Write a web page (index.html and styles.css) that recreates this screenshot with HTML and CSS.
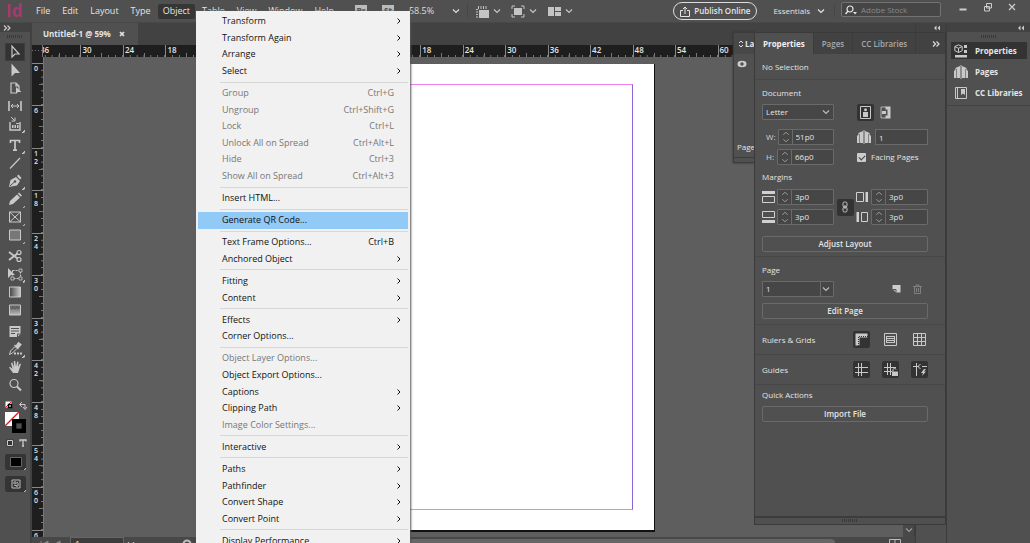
FILE: index.html
```html
<!DOCTYPE html>
<html lang="en">
<head>
<meta charset="utf-8">
<title>Untitled-1 @ 59%</title>
<link rel="stylesheet" href="styles.css">
</head>
<body>
<svg class="defs" width="0" height="0" aria-hidden="true">
  <symbol id="chev" viewBox="0 0 8 6"><path d="M1 1.500l3 3 3-3" fill="none" stroke="currentColor" stroke-width="1.200"/></symbol>
  <symbol id="sub" viewBox="0 0 6 8"><path d="M1.500 1.500L4 4 1.500 6.500" fill="none" stroke="currentColor" stroke-width="1"/></symbol>
  <symbol id="collapse" viewBox="0 0 8 6"><path d="M3.500 .5L1 3l2.500 2.500zM7 .5L4.500 3 7 5.500z" fill="currentColor"/></symbol>
  <symbol id="expand" viewBox="0 0 8 6"><path d="M1 .5L3.500 3 1 5.500M4.500 .5L7 3 4.500 5.500" fill="none" stroke="currentColor" stroke-width="1.200"/></symbol>
  <symbol id="step" viewBox="0 0 14 16"><path d="M4 5.500l3-3 3 3M4 10.500l3 3 3-3" fill="none" stroke="currentColor"/></symbol>
  <symbol id="spread" viewBox="0 0 14 14"><path d="M0 13V6l1.500-1.500V3L6 1v12zM8 13V1l4.500 2v1.500L14 6v7z" fill="currentColor"/><path d="M2.500 4v9M11.500 4v9" stroke="#505050" stroke-width=".6"/><path d="M7 0v14" stroke="currentColor"/></symbol>
</svg>

<div class="app">
  <header class="menubar">
    <span class="logo">Id</span>
    <nav class="menus">
      <button>File</button><button>Edit</button><button>Layout</button><button>Type</button><button class="open">Object</button><button>Table</button><button>View</button><button>Window</button><button>Help</button>
    </nav>
    <div class="appbar">
      <button class="chip">Br</button>
      <button class="chip">St</button>
      <button class="zoomlevel">58.5%<svg width="8" height="6"><use href="#chev"/></svg></button>
      <div class="viewtools">
        <button><svg width="14" height="13" viewBox="0 0 14 13"><path d="M4 5h10v8H4z" fill="currentColor"/><path d="M3 2.500h10" stroke="currentColor" stroke-width="3" stroke-dasharray="1 1.500"/><path d="M2 4v9" stroke="currentColor" stroke-width="2" stroke-dasharray="1 1.500"/></svg><svg width="8" height="6"><use href="#chev"/></svg></button>
        <button><svg width="14" height="13" viewBox="0 0 14 13"><path d="M3 3h8v7H3z" fill="currentColor"/><path d="M1 4V1h3M10 1h3v3M13 9v3h-3M4 12H1V9" fill="none" stroke="currentColor"/></svg><svg width="8" height="6"><use href="#chev"/></svg></button>
        <button><svg width="14" height="13" viewBox="0 0 14 13"><path d="M1 2h6v9H1zM8 2h6v4H8zM8 7h6v4H8z" fill="currentColor"/></svg><svg width="8" height="6"><use href="#chev"/></svg></button>
      </div>
    </div>
    <div class="right">
      <button class="publish"><svg width="10" height="11" viewBox="0 0 10 11"><path d="M3 4.500H.5v6h9v-6H7M5 8V1M3 3l2-2 2 2" fill="none" stroke="currentColor"/></svg>Publish Online</button>
      <button class="essentials">Essentials<svg width="8" height="6"><use href="#chev"/></svg></button>
      <label class="search"><svg width="13" height="10" viewBox="0 0 13 10"><circle cx="5" cy="4" r="3" fill="none" stroke="currentColor" stroke-width="1.200"/><path d="M3 6L.5 9" stroke="currentColor" stroke-width="1.500"/><path d="M8 7h4l-2 2.500z" fill="currentColor"/></svg><input type="text" placeholder="Adobe Stock" aria-label="Adobe Stock"></label>
      <div class="wincontrols">
        <button aria-label="Minimize"><svg width="10" height="10" viewBox="0 0 10 10"><path d="M1.500 7.500h7" stroke="currentColor" stroke-width="2"/></svg></button>
        <button aria-label="Restore"><svg width="10" height="10" viewBox="0 0 10 10"><path d="M3.500 1.500h5v4.500h-5zM1.500 4.500h5V9h-5z" fill="#505050" stroke="currentColor"/></svg></button>
        <button aria-label="Close"><svg width="10" height="10" viewBox="0 0 10 10"><path d="M2 2l6 6M8 2L2 8" stroke="currentColor" stroke-width="1.200"/></svg></button>
      </div>
    </div>
  </header>

  <main class="workspace">
    <aside class="toolbar">
      <div class="dockhead start"><svg width="8" height="6"><use href="#expand"/></svg></div>
      <div class="grip"></div>
      <div class="tools">
        <button class="on" aria-label="Selection"><svg viewBox="0 0 20 18"><path d="M7 3v11l3-3h4z" fill="none" stroke="currentColor" stroke-width="1.200"/></svg></button>
        <button aria-label="Direct Selection"><svg viewBox="0 0 20 18"><path d="M6.500 2.500v13l3.500-3.500h5z" fill="currentColor"/></svg></button>
        <button aria-label="Page"><svg viewBox="0 0 20 18"><path d="M11 14H6V4h5l3 3v4M11 4v3h3" fill="none" stroke="currentColor" stroke-width="1.200"/><path d="M11 8v7l2-2h3.500z" fill="currentColor"/></svg></button>
        <button aria-label="Gap"><svg viewBox="0 0 20 18"><path d="M4 4v10M16 4v10" stroke="currentColor" stroke-width="1.600"/><path d="M6 9h8M8 7L6 9l2 2M12 7l2 2-2 2" fill="none" stroke="currentColor"/></svg></button>
        <button class="more" aria-label="Content Collector"><svg viewBox="0 0 20 18"><path d="M5 7v8h10V7" fill="none" stroke="currentColor" stroke-width="1.400"/><path d="M7 10h1.500v3H7zM9.500 10H11v3H9.500zM12 10h1.500v3H12z" fill="currentColor"/><path d="M6 2l3.500 3.500M10 2.500V6H6.500M11 8.500h3" fill="none" stroke="currentColor"/></svg></button>
      </div>
      <div class="tools">
        <button class="more" aria-label="Type"><svg viewBox="0 0 20 18"><path d="M5.500 7V4.500h9V7M10 4.500V14M8 14.200h4" fill="none" stroke="currentColor" stroke-width="1.700"/></svg></button>
        <button aria-label="Line"><svg viewBox="0 0 20 18"><path d="M5 14.500L15 4" stroke="currentColor" stroke-width="1.200"/></svg></button>
        <button class="more" aria-label="Pen"><svg viewBox="0 0 20 18"><path d="M4 15l1.500-7L11 5l4 4-3 4.500z" fill="currentColor"/><path d="M12 4l1.500-1.500L16.500 6 15 7.500z" fill="currentColor"/><path d="M5 14l4.500-4" stroke="#505050"/><circle cx="10" cy="9.500" r="1.200" fill="#505050"/></svg></button>
        <button class="more" aria-label="Pencil"><svg viewBox="0 0 20 18"><path d="M4 15l1-4 7-6.500 3 3L8 14zM12.800 3.800L14 2.500l3 3-1.200 1.200z" fill="currentColor"/></svg></button>
        <button class="more" aria-label="Rectangle Frame"><svg viewBox="0 0 20 18"><path d="M4.500 4h11v10h-11zM4.500 4l11 10M15.500 4l-11 10" fill="none" stroke="currentColor"/></svg></button>
        <button class="more" aria-label="Rectangle"><svg viewBox="0 0 20 18"><path d="M4.500 4h11v10h-11z" fill="#777" stroke="currentColor"/></svg></button>
      </div>
      <div class="tools">
        <button aria-label="Scissors"><svg viewBox="0 0 20 18"><circle cx="14" cy="5.500" r="2" fill="none" stroke="currentColor" stroke-width="1.200"/><circle cx="14" cy="12.500" r="2" fill="none" stroke="currentColor" stroke-width="1.200"/><path d="M4 5l8.500 6.500M4 13l8.500-6.500" stroke="currentColor" stroke-width="1.800"/></svg></button>
        <button class="more" aria-label="Free Transform"><svg viewBox="0 0 20 18"><path d="M7.500 5.500h8v8h-8z" fill="none" stroke="currentColor" stroke-dasharray="2 1"/><path d="M6 12h3v3H6zM14 12h3v3h-3zM14 4h3v3h-3z" fill="#505050" stroke="currentColor" stroke-width=".8"/><path d="M3 3v10l3-3h4z" fill="currentColor"/></svg></button>
        <button aria-label="Gradient Swatch"><svg viewBox="0 0 20 18"><defs><linearGradient id="g1"><stop stop-color="#444"/><stop offset="1" stop-color="#ccc"/></linearGradient></defs><path d="M4.500 4h11v10h-11z" fill="url(#g1)" stroke="currentColor"/></svg></button>
        <button aria-label="Gradient Feather"><svg viewBox="0 0 20 18"><defs><linearGradient id="g2" x2="0" y2="1"><stop stop-color="#555"/><stop offset="1" stop-color="#bbb"/></linearGradient></defs><path d="M4.500 4h11v10h-11z" fill="url(#g2)" stroke="currentColor"/><path d="M6 8q2-3 4 0 2-3 4 0" fill="none" stroke="#555"/></svg></button>
      </div>
      <div class="tools">
        <button aria-label="Note"><svg viewBox="0 0 20 18"><path d="M4.500 4h11v8l-3 3h-8z" fill="currentColor"/><path d="M6 6.500h8M6 9h8M6 11.500h4M12.500 15v-3h3" fill="none" stroke="#505050"/></svg></button>
        <button class="more" aria-label="Eyedropper"><svg viewBox="0 0 20 18"><path d="M4.500 14.500l1-3.500 4.500-4.500 2 2L7.500 13z" fill="none" stroke="currentColor"/><path d="M9.500 5l4 4M11 6l2.500-3.500 2.500 2L13 8z" stroke="currentColor" stroke-width="1.200" fill="currentColor"/><path d="M9 13.500h8" stroke="currentColor" stroke-width="2" stroke-dasharray="2 1"/></svg></button>
        <button aria-label="Hand"><svg viewBox="0 0 20 18"><path d="M8 15L4 9.500l1-.7L7.500 11 6 5l1.300-.4L9 9l-.2-6h1.400L11 8.500l1.200-5 1.300.3L13 9l1.800-3.500 1.200.6L14 12l-1 3z" fill="currentColor"/></svg></button>
        <button aria-label="Zoom"><svg viewBox="0 0 20 18"><circle cx="9" cy="7.500" r="4" fill="none" stroke="currentColor" stroke-width="1.200"/><path d="M12 10.500l4 4" stroke="currentColor" stroke-width="2"/></svg></button>
      </div>
      <div class="colors">
        <svg width="24" height="42" viewBox="0 0 24 42">
          <path d="M1.500 4.500h6v6h-6z" fill="#fff"/><path d="M1.500 10.500l6-6" stroke="#d22"/><path d="M4.500 7.500h3v3h-3z" fill="none" stroke="#000" stroke-width="1.500"/>
          <path d="M16 7.500h5v4M18 5l-2.500 2.500L18 10M19 10l2 2.500 2-2.500" fill="none" stroke="#ccc"/>
          <path d="M1 15h14v14H1z" fill="#fff"/><path d="M1 29l14-14" stroke="#d2232a" stroke-width="1.500"/>
          <path d="M8 22h14v14H8z" fill="#000"/><path d="M12.500 26.500h5v5h-5z" fill="#505050" stroke="#333"/>
        </svg>
        <div class="affect"><svg width="8" height="8" viewBox="0 0 8 8"><path d="M.5 .5h7v7h-7z" fill="#333"/><path d="M1.500 1.500h5v5h-5z" fill="none" stroke="#ccc"/></svg><svg width="8" height="8" viewBox="0 0 8 8"><path d="M1 2.500V1h6v1.500M4 1v6M3 7h2" fill="none" stroke="#ccc" stroke-width="1.300"/></svg></div>
        <button class="well more" aria-label="Apply Color"><svg width="12" height="10"><path d="M.5 .5h11v9H.5z" fill="#000" stroke="#666"/></svg></button>
        <button class="well more" aria-label="Screen Mode"><svg width="10" height="10" viewBox="0 0 10 10"><path d="M1 1h8v8H1z" fill="none" stroke="#bbb"/><path d="M3 5V3h2M5 7h2V4M4 5l3-2M3 6l3 1" fill="none" stroke="#bbb"/></svg></button>
      </div>
    </aside>

    <section class="document">
      <div class="tabs"><div class="tab"><span>Untitled-1 @ 59%</span><button aria-label="Close tab"><svg width="6" height="6"><path d="M1 1l4 4M5 1L1 5" stroke="currentColor" stroke-width="1.700"/></svg></button></div></div>
      <div class="hruler"><div class="origin"></div><div class="hscale"><span>36</span><span>30</span><span>24</span><span>18</span><span>12</span><span>6</span><span>0</span><span>6</span><span>12</span><span>18</span><span>24</span><span>30</span><span>36</span><span>42</span><span>48</span><span>54</span><span>60</span></div></div>
      <div class="stage">
        <div class="vruler"><div class="vscale"><span>0</span><span>6</span><span>1<br>2</span><span>1<br>8</span><span>2<br>4</span><span>3<br>0</span><span>3<br>6</span><span>4<br>2</span><span>4<br>8</span><span>5<br>4</span><span>6<br>0</span><span>6<br>6</span></div></div>
        <div class="canvas"><div class="page"><div class="margins"></div></div></div>
        <div class="vscroll"><svg width="8" height="6"><use href="#chev"/></svg></div>
      </div>
      <footer class="status">
        <span class="nav"><svg width="22" height="8"><path d="M1 1v6M8 1v6L3 4zM20 1v6l-5-3z" fill="#888" stroke="#888"/></svg></span>
        <span class="pageno">1</span><span class="drop"><svg width="8" height="6"><use href="#chev"/></svg></span>
        <svg class="preflight" width="10" height="10"><circle cx="5" cy="5" r="3.500" fill="none" stroke="#bbb" stroke-width="2"/></svg>
        <span class="hscroll"></span>
        <svg class="split" width="12" height="10"><path d="M.5 .5h11v9H.5zM6 0v10M0 4.500h12" fill="none" stroke="#bbb"/></svg>
      </footer>
    </section>

    <aside class="dock slim"><div class="dockhead"><svg width="8" height="6"><use href="#collapse"/></svg></div></aside>
    <aside class="dock">
      <div class="dockhead"><svg width="8" height="6"><use href="#collapse"/></svg></div>
      <div class="grip"></div>
      <div class="docklist">
        <button class="on"><svg width="14" height="14" viewBox="0 0 14 14"><path d="M4.500 .8L8.200 2.500v4.200L4.500 8.500.8 6.700V2.500zM.8 2.500l3.700 1.800 3.700-1.800M4.500 4.300v4.200" fill="none" stroke="currentColor"/><path d="M10 1h3v3h-3zM10 6h3v3h-3zM1 11h12v2.500H1z" fill="currentColor"/></svg>Properties</button>
        <button><svg width="14" height="14"><use href="#spread"/></svg>Pages</button>
        <button><svg width="14" height="14" viewBox="0 0 14 14"><path d="M1.500 1.500h11v11h-11zM3.500 1.500v11" fill="none" stroke="currentColor"/><path d="M7 3h4v6L9 7.500 7 9z" fill="currentColor"/></svg>CC Libraries</button>
      </div>
    </aside>
  </main>
</div>

<section class="layers">
  <div class="layerhead"><svg width="6" height="8" viewBox="0 0 6 8"><path d="M1 3l2-2 2 2M1 5l2 2 2-2" fill="none" stroke="currentColor"/></svg>La</div>
  <div class="layerrow"><svg width="10" height="8" viewBox="0 0 10 8"><ellipse cx="5" cy="4" rx="4.500" ry="3.200" fill="#ccc"/><circle cx="5" cy="4" r="1.700" fill="#505050"/></svg></div>
  <div class="layerfoot">Page</div>
</section>

<section class="props">
  <div class="ptabs"><button class="on">Properties</button><button>Pages</button><button>CC Libraries</button><button class="exp" aria-label="Collapse panel"><svg width="8" height="6"><use href="#expand"/></svg></button></div>
  <div class="sec nosel">No Selection</div>
  <div class="sec doc">
    <h2>Document</h2>
    <div class="cols">
      <div class="l"><select aria-label="Page size"><option>Letter</option></select><svg class="selchev" width="8" height="6"><use href="#chev"/></svg></div>
      <div class="orient">
        <button class="tile on" aria-label="Portrait"><svg width="11" height="13" viewBox="0 0 11 13"><path d="M.5 .5h10v12H.5z" fill="none" stroke="currentColor"/><circle cx="5.500" cy="3.800" r="1.500" fill="currentColor"/><path d="M3 6h5v5H3z" fill="currentColor"/></svg></button>
        <button class="tile" aria-label="Landscape"><svg width="11" height="13" viewBox="0 0 11 13"><path d="M6 1H1v11h5" fill="none" stroke="currentColor" stroke-width=".8"/><path d="M5.500 .5h5v12h-5v-3h2v-6h-2z" fill="currentColor"/><path d="M2 5h4v3H2z" fill="currentColor"/></svg></button>
      </div>
    </div>
    <div class="cols gap">
      <div class="l pair"><label class="dim" for="w">W:</label><span class="num"><i><svg width="14" height="14"><use href="#step"/></svg></i><input id="w" value="51p0"></span></div>
      <div class="r wide"><svg width="14" height="14"><use href="#spread"/></svg><input class="solo" value="1" aria-label="Page count"></div>
    </div>
    <div class="cols">
      <div class="l pair"><label class="dim" for="h">H:</label><span class="num"><i><svg width="14" height="14"><use href="#step"/></svg></i><input id="h" value="66p0"></span></div>
      <label class="check"><input type="checkbox" checked>Facing Pages</label>
    </div>
    <h2 class="mh">Margins</h2>
    <div class="margingrid">
      <div class="pair"><svg width="13" height="14" viewBox="0 0 13 14"><path d="M0 1h13v3H0z" fill="currentColor"/><path d="M.5 6.500h12v6H.5z" fill="none" stroke="currentColor"/></svg><span class="num"><i><svg width="14" height="14"><use href="#step"/></svg></i><input value="3p0" aria-label="Top"></span></div>
      <button class="tile on link" aria-label="Link margins"><svg width="6" height="12" viewBox="0 0 6 12"><rect x="1" y="1" width="4" height="5" rx="1.500" fill="none" stroke="currentColor"/><rect x="1" y="6" width="4" height="5" rx="1.500" fill="none" stroke="currentColor"/><path d="M3 4v4" stroke="currentColor"/></svg></button>
      <div class="pair"><svg width="13" height="14" viewBox="0 0 13 14"><path d="M9.500 2H12v10H9.500z" fill="currentColor"/><path d="M.5 2.500h7v9h-7z" fill="none" stroke="currentColor"/></svg><span class="num"><i><svg width="14" height="14"><use href="#step"/></svg></i><input value="3p0" aria-label="Inside"></span></div>
      <div class="pair"><svg width="13" height="14" viewBox="0 0 13 14"><path d="M0 10h13v3H0z" fill="currentColor"/><path d="M.5 1.500h12v6H.5z" fill="none" stroke="currentColor"/></svg><span class="num"><i><svg width="14" height="14"><use href="#step"/></svg></i><input value="3p0" aria-label="Bottom"></span></div>
      <div class="pair"><svg width="13" height="14" viewBox="0 0 13 14"><path d="M.5 2H3v10H.5z" fill="currentColor"/><path d="M5.500 2.500h6v9h-6z" fill="none" stroke="currentColor"/></svg><span class="num"><i><svg width="14" height="14"><use href="#step"/></svg></i><input value="3p0" aria-label="Outside"></span></div>
    </div>
    <button class="btn adj">Adjust Layout</button>
  </div>
  <div class="sec pg">
    <h2>Page</h2>
    <div class="cols">
      <div class="l"><select class="combo" aria-label="Page"><option>1</option></select><svg class="selchev" width="8" height="6"><use href="#chev"/></svg></div>
      <div class="acts"><svg width="9" height="9"><path d="M.5 1h8v7.500H4L.5 5z" fill="#ccc"/><path d="M1 5.500h3v3" fill="none" stroke="#505050"/></svg><svg width="9" height="10" viewBox="0 0 9 10"><path d="M0 2.500h9M3 2V1h3v1M1.500 3v6.500h6V3M3.500 4v4M5.500 4v4" fill="none" stroke="#808080"/></svg></div>
    </div>
    <button class="btn edit">Edit Page</button>
  </div>
  <div class="sec row">Rulers &amp; Grids
    <span class="tiles">
      <button class="tile on" aria-label="Rulers"><svg width="13" height="13" viewBox="0 0 13 13"><path d="M.5 .5h12v4h-8v8h-4z" fill="currentColor"/><path d="M4 3.500h9M3.500 4v9" stroke="#333" stroke-dasharray="1 1"/></svg></button>
      <button class="tile" aria-label="Baseline Grid"><svg width="13" height="13" viewBox="0 0 13 13"><path d="M.5 .5h12v12H.5zM2.500 3.500h8M2.500 5.500h8M2.500 7.500h8M2.500 9.500h8M2.500 3v7M10.500 3v7" fill="none" stroke="currentColor"/></svg></button>
      <button class="tile" aria-label="Document Grid"><svg width="13" height="13" viewBox="0 0 13 13"><path d="M.5 .5h12v12H.5zM4.500 0v13M8.500 0v13M0 4.500h13M0 8.500h13" fill="none" stroke="currentColor"/></svg></button>
    </span>
  </div>
  <div class="sec row">Guides
    <span class="tiles">
      <button class="tile on" aria-label="Show Guides"><svg width="13" height="13" viewBox="0 0 13 13"><path d="M3.500 0v13M6.500 0v13M0 4.500h13M0 9.500h13" stroke="currentColor"/></svg></button>
      <button class="tile on" aria-label="Lock Guides"><svg width="14" height="13" viewBox="0 0 14 13"><path d="M3.500 0v12M6.500 0v12M0 4.500h12M0 8.500h8" stroke="currentColor"/><path d="M8 8.500h6V13H8z" fill="currentColor"/><path d="M9 8.500V6.500q0-1 1.500-1t1.500 1" fill="none" stroke="currentColor"/></svg></button>
      <button class="tile on" aria-label="Smart Guides"><svg width="14" height="13" viewBox="0 0 14 13"><path d="M3.500 0v13M0 3.500h6M9 3.500h5M7.500 1L5 3.500 7.500 6" fill="none" stroke="currentColor"/><path d="M11 6L8 10h2l-1 3 4-4.500h-2L13 6z" fill="currentColor"/></svg></button>
    </span>
  </div>
  <div class="sec quick"><h2>Quick Actions</h2><button class="btn">Import File</button></div>
  <div class="pfoot"><div class="grip"></div></div>
</section>

<div class="menu" role="menu">
  <button>Transform<svg><use href="#sub"/></svg></button>
  <button>Transform Again<svg><use href="#sub"/></svg></button>
  <button>Arrange<svg><use href="#sub"/></svg></button>
  <button>Select<svg><use href="#sub"/></svg></button>
  <hr>
  <button disabled>Group<kbd>Ctrl+G</kbd></button>
  <button disabled>Ungroup<kbd>Ctrl+Shift+G</kbd></button>
  <button disabled>Lock<kbd>Ctrl+L</kbd></button>
  <button disabled>Unlock All on Spread<kbd>Ctrl+Alt+L</kbd></button>
  <button disabled>Hide<kbd>Ctrl+3</kbd></button>
  <button disabled>Show All on Spread<kbd>Ctrl+Alt+3</kbd></button>
  <hr>
  <button>Insert HTML...</button>
  <hr>
  <button class="hot">Generate QR Code...</button>
  <hr>
  <button>Text Frame Options...<kbd>Ctrl+B</kbd></button>
  <button>Anchored Object<svg><use href="#sub"/></svg></button>
  <hr>
  <button>Fitting<svg><use href="#sub"/></svg></button>
  <button>Content<svg><use href="#sub"/></svg></button>
  <hr>
  <button>Effects<svg><use href="#sub"/></svg></button>
  <button>Corner Options...</button>
  <hr>
  <button disabled>Object Layer Options...</button>
  <button>Object Export Options...</button>
  <button>Captions<svg><use href="#sub"/></svg></button>
  <button>Clipping Path<svg><use href="#sub"/></svg></button>
  <button disabled>Image Color Settings...</button>
  <hr>
  <button>Interactive<svg><use href="#sub"/></svg></button>
  <hr>
  <button>Paths<svg><use href="#sub"/></svg></button>
  <button>Pathfinder<svg><use href="#sub"/></svg></button>
  <button>Convert Shape<svg><use href="#sub"/></svg></button>
  <button>Convert Point<svg><use href="#sub"/></svg></button>
  <hr>
  <button>Display Performance<svg><use href="#sub"/></svg></button>
</div>
</body>
</html>
```
FILE: styles.css
```css
* { box-sizing: border-box; }
html, body { margin: 0; height: 100%; overflow: hidden; }
body { font: 9px/12px "Open Sans", "Noto Sans", sans-serif; color: #e4e4e4; background: #505050; position: relative; }
button { font: inherit; color: inherit; background: none; border: 0; padding: 0; display: flex; align-items: center; }
input, select { font: inherit; color: inherit; }
h2 { font: inherit; margin: 0; line-height: 12px; }
svg { display: block; flex: none; }
.defs { position: absolute; }
.app { height: 100vh; display: flex; flex-direction: column; }

/* Application bar */
.menubar { height: 23px; flex: none; display: flex; align-items: center; background: #505050; border-bottom: 1px solid #484848; }
.logo { width: 31px; padding-left: 6px; font: bold 17px/20px "Open Sans", sans-serif; color: #a8396f; }
.menus { display: flex; gap: 2px; }
.menus button { padding: 0 5px; height: 15px; }
.menus .open { background: #363636; border-radius: 2px; }
.appbar { display: flex; align-items: center; margin-left: 16px; }
.chip { width: 12px; height: 12px; margin-right: 15px; background: #bbb; color: #505050; justify-content: center; font-size: 8px; font-weight: bold; }
.zoomlevel { gap: 18px; color: #ddd; }
.zoomlevel, .viewtools { height: 15px; }
.viewtools { display: flex; gap: 10px; margin-left: 7px; padding-left: 7px; border-left: 1px solid #464646; color: #c4c4c4; }
.viewtools button { gap: 4px; }
.right { margin-left: auto; display: flex; align-items: center; font-size: 8px; }
.publish { height: 18px; padding: 0 6px; gap: 4px; border: 1px solid #ddd; border-radius: 9px; font-weight: 600; white-space: nowrap; }
.essentials { margin-left: 16px; gap: 7px; padding-right: 9px; border-right: 1px solid #464646; }
.search { width: 100px; height: 15px; margin: 0 13px 3px 6px; border: 1px solid #737373; border-radius: 2px; background: #464646; display: flex; align-items: center; padding-left: 3px; gap: 3px; }
.search input { width: 100%; min-width: 0; border: 0; background: none; padding: 0; outline: 0; }
.search input::placeholder { color: #898989; }
.wincontrols { display: flex; width: 76px; padding: 0 13px 8px 4px; justify-content: space-between; color: #ccc; }

/* Docks */
.workspace { flex: 1; min-height: 0; display: flex; }
.dockhead { height: 9px; background: #424242; display: flex; align-items: center; justify-content: flex-end; padding: 0 5px; color: #ccc; }
.dockhead.start { justify-content: flex-start; padding: 0 3px; }
.grip { width: 16px; height: 3px; margin: 3px auto; background: repeating-linear-gradient(90deg, #3a3a3a 0 1px, transparent 1px 2px); }
.toolbar { width: 32px; flex: none; background: #505050; border-right: 2px solid #414141; display: flex; flex-direction: column; color: #c9c9c9; overflow: hidden; }
.toolbar .grip { margin: 3px 7px 5px; }
.tools { display: flex; flex-direction: column; margin-bottom: 3px; padding-left: 5px; }
.tools button { width: 20px; height: 18px; border-radius: 2px; }
.tools svg { width: 20px; height: 18px; }
.on { background: #333; }
.tools .on { box-shadow: 0 0 0 1px #3c3c3c inset; }
.more { background-image: linear-gradient(135deg, transparent 50%, #c9c9c9 50%); background-size: 3px 3px; background-position: right bottom; background-repeat: no-repeat; }
.colors { padding-left: 4px; }
.affect { display: flex; gap: 5px; padding-left: 2px; margin: 0 0 7px; }
.well { width: 21px; height: 16px; margin: 0 0 6px 1px; justify-content: center; background-color: #343434; border-radius: 2px; }
.dock { width: 84px; flex: none; background: #505050; border-left: 1px solid #3c3c3c; }
.dock.slim { width: 31px; }
.docklist { padding: 0 3px 0 4px; border-bottom: 1px solid #424242; height: 64px; font-size: 8px; }
.dock .grip { margin: 3px auto 4px; }
.docklist button { width: 100%; height: 17px; margin-bottom: 4px; padding-left: 3px; gap: 7px; font-weight: bold; color: #e6e6e6; white-space: nowrap; }
.docklist svg { color: #c9c9c9; }

/* Document window */
.document { flex: 1; min-width: 0; display: flex; flex-direction: column; background: #5e5e5e; }
.tabs { height: 22px; flex: none; background: #424242; display: flex; font-size: 8px; }
.tab { background: #505050; padding: 0 13px 0 11px; display: flex; align-items: center; gap: 8px; font-weight: bold; white-space: nowrap; }
.hruler { height: 12px; flex: none; display: flex; background: #1e1e1e; overflow: hidden; font-size: 8px; }
.origin { width: 11px; flex: none; border-right: 1px solid #777; background: repeating-linear-gradient(90deg, #777 0 1px, transparent 1px 3px) 0 5px / 10px 1px no-repeat; }
.hscale { width: 722px; flex: none; margin-left: -5px; display: grid; grid-template-columns: repeat(17, 1fr); clip-path: inset(0 0 0 5px); }
.hscale span { border-left: 1px solid #888; padding-left: 1px; line-height: 9px; font-weight: 600; background: linear-gradient(90deg, #777 1px, transparent 1px) -1px bottom / calc(100% / 6) 2px repeat-x, linear-gradient(90deg, transparent calc(50% - 1px), #777 calc(50% - 1px) 50%, transparent 50%) bottom / 100% 4px no-repeat; }
.stage { flex: 1; min-height: 0; display: flex; overflow: hidden; }
.vruler { width: 12px; flex: none; background: #1e1e1e; border-right: 1px solid #777; padding-top: 6px; overflow: hidden; font-size: 7px; }
.vscale { height: 509px; display: grid; grid-template-rows: repeat(12, 1fr); }
.vscale span { border-top: 1px solid #888; padding: 1px 0 0 2px; line-height: 8px; font-weight: 600; background: linear-gradient(#777 1px, transparent 1px) right -1px / 2px calc(100% / 6), linear-gradient(transparent calc(50% - 1px), #777 calc(50% - 1px) 50%, transparent 50%) right top / 4px 100%; background-repeat: repeat-y, no-repeat; }
.canvas { flex: 1; padding: 7px 0 0 249px; }
.page { width: 362px; height: 468px; background: #fff; padding: 20px 21px 20px 20px; border-right: 1px solid #111; border-bottom: 2px solid #111; }
.margins { height: 100%; border: 1px solid #f07ff0; border-right-color: #8d63d8; border-left-color: #8d63d8; }
.vscroll { width: 12px; background: #484848; border-right: 1px solid #3c3c3c; display: flex; align-items: flex-end; justify-content: center; padding-bottom: 4px; color: #999; }
.status { height: 6px; flex: none; overflow: hidden; display: flex; align-items: flex-start; background: #484848; padding-left: 8px; }
.nav { width: 30px; padding-top: 3px; }
.pageno { width: 54px; padding-left: 4px; line-height: 14px; background: #3c3c3c; border: 1px solid #666; }
.drop { width: 14px; padding: 4px 3px; }
.preflight { margin: 2px 0 0 44px; }
.hscroll { flex: 1; margin: 2px 54px 0 200px; height: 8px; background: #666; border-radius: 4px; }
.split { margin: 2px 14px 0 0; }

/* Layers panel */
.layers { position: absolute; top: 32px; right: 275px; width: 22px; height: 131px; background: #505050; border: 1px solid #3c3c3c; overflow: hidden; white-space: nowrap; display: flex; flex-direction: column; box-shadow: 0 0 2px #333; font-size: 8px; }
.layerhead { height: 21px; background: #484848; display: flex; align-items: center; gap: 1px; padding-left: 4px; font-weight: bold; }
.layerrow { flex: 1; padding: 6px 3px; }
.layerfoot { padding: 0 3px; height: 17px; border-bottom: 1px solid #3c3c3c; margin-bottom: 4px; }

/* Properties panel */
.props { position: absolute; top: 32px; right: 84px; width: 192px; background: #505050; border: 1px solid #3a3a3a; font-size: 8px; }
.ptabs { display: flex; height: 21px; background: #424242; }
.ptabs button { padding: 0 8px; color: #a8a8a8; font-weight: 600; border-right: 1px solid #3c3c3c; white-space: nowrap; }
.ptabs .on { background: #505050; color: #f0f0f0; font-weight: bold; }
.ptabs .exp { margin-left: auto; padding: 0 5px; border: 0; color: #ddd; }
.sec { padding: 7px 17px 0 7px; border-bottom: 1px solid #474747; }
.nosel { height: 26px; }
.doc { height: 177px; }
.cols { display: flex; height: 16px; margin-bottom: 4px; position: relative; align-items: center; justify-content: space-between; }
.doc h2 { margin-bottom: 5px; }
.cols.gap { margin-top: 9px; }
.doc .mh { margin: 6px 0; }
.l { width: 72px; position: relative; }
.l select { display: block; width: 100%; height: 16px; border: 1px solid #6a6a6a; background: #464646; border-radius: 1px; appearance: none; padding: 0 3px; outline: 0; }
.l .combo { background: linear-gradient(90deg, transparent 57px, #6a6a6a 57px 58px, transparent 58px), #464646; }
.selchev { position: absolute; right: 4px; top: 5px; pointer-events: none; color: #bbb; }
.orient { width: 71px; display: flex; gap: 3px; }
.tile { width: 17px; height: 17px; justify-content: center; border-radius: 2px; color: #c9c9c9; }
.pair { display: flex; align-items: center; justify-content: space-between; gap: 2px; color: #d0d0d0; }
.dim { padding-left: 4px; }
.num { display: flex; height: 16px; width: 57px; border: 1px solid #6a6a6a; border-radius: 1px; background: #464646; color: #e4e4e4; }
.num i { width: 14px; border-right: 1px solid #6a6a6a; color: #aaa; }
.num input { border: 0; background: none; padding: 0 3px; flex: 1; width: 20px; min-width: 0; }
.r { width: 71px; display: flex; align-items: center; gap: 4px; color: #c9c9c9; }
.solo { flex: 1; min-width: 0; height: 16px; border: 1px solid #6a6a6a; background: #464646; color: #e4e4e4; padding: 0 3px; }
.check { width: 71px; display: flex; align-items: center; gap: 5px; white-space: nowrap; }
.check input { appearance: none; width: 9px; height: 9px; margin: 0; border-radius: 1px; background: #ccc; display: grid; place-items: center; }
.check input::before { content: ""; width: 5px; height: 3px; border: solid #444; border-width: 0 0 1px 1px; transform: rotate(-45deg); }
.margingrid { display: grid; grid-template-columns: 72px 17px 72px; row-gap: 4px; justify-content: space-between; align-items: center; }
.link { grid-row: 1 / 3; grid-column: 2; }
.btn { width: 100%; height: 16px; border: 1px solid #6a6a6a; border-radius: 2px; justify-content: center; font-weight: 600; }
.adj { margin-top: 11px; }
.pg { height: 68px; }
.pg h2 { margin-bottom: 5px; }
.acts { display: flex; gap: 12px; padding-right: 6px; }
.edit { margin-top: 6px; }
.row { height: 30px; padding: 0 17px 0 7px; display: flex; align-items: center; justify-content: space-between; }
.tiles { display: flex; gap: 12px; }
.quick { height: 133px; padding-top: 4px; border-bottom: 2px solid #3c3c3c; }
.quick h2 { margin-bottom: 5px; }
.pfoot { height: 6px; padding-top: 1px; }
.pfoot .grip { margin: 0 auto; }

/* Object menu */
.menu { position: absolute; left: 196px; top: 11px; width: 214px; height: 540px; padding: 2px 2px; background: #f1f1f1; color: #111; display: flex; flex-direction: column; box-shadow: 1px 0 2px #555; }
.menu button { flex: 3 1 0; min-height: 0; padding: 0 6px 0 24px; justify-content: space-between; white-space: nowrap; }
.menu button:disabled { color: #777; }
.menu .hot { background: #91c9f7; }
.menu hr { flex: 1 1 0; width: 188px; margin: 0 0 0 auto; border: 0; background: linear-gradient(#d7d7d7, #d7d7d7) center / 100% 1px no-repeat; }
.menu svg { width: 6px; height: 8px; }
.menu kbd { font: inherit; margin-right: 8px; }
```
